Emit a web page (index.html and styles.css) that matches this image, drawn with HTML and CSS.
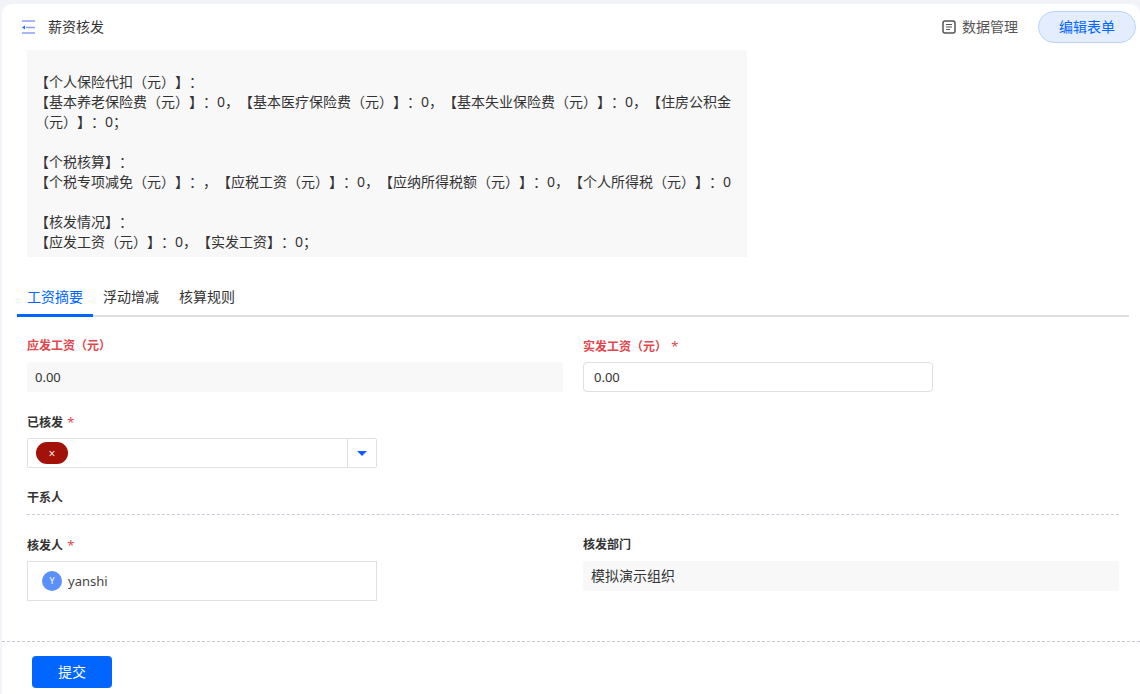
FILE: index.html
```html
<!DOCTYPE html>
<html lang="zh-CN">
<head>
  <meta charset="UTF-8">
  <title>薪资核发</title>
  <link rel="stylesheet" href="styles.css">
</head>
<body>
  <div class="card">
    <header class="topbar">
      <svg class="menu-icon" width="14" height="14" viewBox="0 0 14 14">
        <path d="M1 1h13M5 7.5h9M1 13h13" stroke="#8c9dff" stroke-width="1.6" fill="none"/>
        <path d="M1 7.5l3-2v4z" fill="#1f6bff"/>
      </svg>
      <span class="page-title">薪资核发</span>
      <div class="topbar-right">
        <svg class="data-icon" width="14" height="14" viewBox="0 0 14 14">
          <rect x="1" y="1" width="12" height="12" rx="2" stroke="#555" stroke-width="1.5" fill="none"/>
          <path d="M4 4.5h6M4 7h6M4 9.5h4" stroke="#555" stroke-width="1.1" fill="none"/>
        </svg>
        <span class="data-link">数据管理</span>
        <button class="edit-btn">编辑表单</button>
      </div>
    </header>

    <main class="content">
      <div class="summary">
        <p>&nbsp;</p>
        <p>【个人保险代扣（元）】：</p>
        <p>【基本养老保险费（元）】：0，【基本医疗保险费（元）】：0，【基本失业保险费（元）】：0，【住房公积金（元）】：0；</p>
        <p>&nbsp;</p>
        <p>【个税核算】：</p>
        <p>【个税专项减免（元）】：，【应税工资（元）】：0，【应纳所得税额（元）】：0，【个人所得税（元）】：0</p>
        <p>&nbsp;</p>
        <p>【核发情况】：</p>
        <p>【应发工资（元）】：0，【实发工资】：0；</p>
      </div>

      <nav class="tabs">
        <a class="tab active">工资摘要</a>
        <a class="tab">浮动增减</a>
        <a class="tab">核算规则</a>
      </nav>

      <section class="form">
        <div class="row two-col">
          <div class="field">
            <label class="label red">应发工资（元）</label>
            <div class="readonly num">0.00</div>
          </div>
          <div class="field">
            <label class="label red">实发工资（元） <i class="req">*</i></label>
            <div class="input num">0.00</div>
          </div>
        </div>

        <div class="field select-field">
          <label class="label">已核发 <i class="req">*</i></label>
          <div class="select">
            <div class="select-value"><span class="chip">×</span></div>
            <div class="select-arrow"><span class="caret"></span></div>
          </div>
        </div>

        <div class="group-title">干系人</div>

        <div class="row two-col">
          <div class="field">
            <label class="label">核发人 <i class="req">*</i></label>
            <div class="user-box">
              <span class="avatar">Y</span>
              <span class="user-name">yanshi</span>
            </div>
          </div>
          <div class="field">
            <label class="label">核发部门</label>
            <div class="readonly">模拟演示组织</div>
          </div>
        </div>
      </section>
    </main>

    <footer class="footer">
      <button class="submit-btn">提交</button>
    </footer>
  </div>
</body>
</html>
```

FILE: styles.css
```css
* {
  box-sizing: border-box;
}

html, body {
  height: 100%;
}

body {
  margin: 0;
  padding: 4px 0 0 2px;
  background-color: #f2f3f8;
  color: #333;
  font-family: "Noto Sans", "Noto Sans CJK SC", sans-serif;
  font-size: 14px;
  text-spacing-trim: space-all;
  overflow: hidden;
}

.card {
  height: 690px;
  background-color: #fff;
  border-radius: 10px 10px 0 0;
  display: flex;
  flex-direction: column;
}

.topbar {
  height: 46px;
  flex: none;
  display: flex;
  align-items: center;
  padding-left: 19px;
}

.menu-icon {
  margin-right: 13px;
}

.page-title {
  padding-bottom: 2px;
  color: #333;
}

.topbar-right {
  margin-left: auto;
  display: flex;
  align-items: center;
  padding-right: 4px;
}

.data-link {
  margin-left: 6px;
  margin-right: 20px;
  padding-bottom: 2px;
  color: #555;
}

.edit-btn {
  width: 98px;
  height: 32px;
  padding: 0 0 2px;
  border: 1px solid #bcd4fb;
  border-radius: 16px;
  background-color: #e3edfd;
  color: #0066ff;
  font: inherit;
}

.content {
  flex: 1;
  padding: 0 11px 0 15px;
}

.summary {
  width: 720px;
  margin-left: 10px;
  padding: 2px 12px 5px 8px;
  background-color: #f8f8f8;
  line-height: 20px;
  color: #333;
}

.summary p {
  margin: 0;
}

.tabs {
  display: flex;
  height: 60px;
  align-items: flex-end;
  border-bottom: 2px solid #e0e0e0;
}

.tab {
  display: block;
  padding: 0 10px 7px;
  height: 34px;
  line-height: 28px;
  color: #333;
  margin-bottom: -2px;
  border-bottom: 3px solid transparent;
}

.tab.active {
  color: #0066ff;
  border-bottom-color: #0066ff;
}

.form {
  padding: 0 0 0 10px;
  width: 1102px;
}

.two-col {
  display: grid;
  grid-template-columns: 536px 536px;
  column-gap: 20px;
}

.row {
  padding-top: 20px;
}

.label {
  display: block;
  height: 25px;
  line-height: 18px;
  font-size: 12px;
  font-weight: 700;
  color: #333;
}

.label.red {
  color: #e0474c;
}

.req {
  font-style: normal;
  font-size: 13px;
  font-weight: 400;
  color: #e0474c;
  margin-left: 1px;
}

.readonly {
  height: 30px;
  line-height: 30px;
  padding: 0 8px;
  background-color: #f8f8f8;
  border-radius: 2px;
  color: #333;
}

.input {
  width: 350px;
  height: 30px;
  line-height: 28px;
  padding: 0 10px;
  border: 1px solid #e0e0e0;
  border-radius: 4px;
}

.num {
  font-size: 13px;
}

.select-field {
  padding-top: 21px;
}

.select {
  width: 350px;
  height: 30px;
  display: flex;
  border: 1px solid #e0e0e0;
  border-radius: 2px;
}

.select-value {
  flex: 1;
  display: flex;
  align-items: center;
  padding-left: 8px;
}

.chip {
  width: 32px;
  height: 22px;
  border-radius: 11px;
  background-color: #a31208;
  color: #f7e3e1;
  font-size: 12px;
  line-height: 23px;
  text-align: center;
}

.select-arrow {
  width: 29px;
  display: flex;
  align-items: center;
  justify-content: center;
  border-left: 1px solid #e0e0e0;
}

.caret {
  width: 0;
  height: 0;
  border-left: 5px solid transparent;
  border-right: 5px solid transparent;
  border-top: 5px solid #0f5bff;
}

.group-title {
  margin-top: 21px;
  margin-bottom: 1px;
  height: 26px;
  line-height: 18px;
  font-size: 12px;
  font-weight: 700;
  border-bottom: 1px dashed #c8cfdc;
}

.user-box {
  width: 350px;
  height: 40px;
  display: flex;
  align-items: center;
  padding-left: 14px;
  border: 1px solid #e0e0e0;
}

.avatar {
  width: 20px;
  height: 20px;
  border-radius: 50%;
  background-color: #5b8ff9;
  color: #fff;
  font-size: 9px;
  line-height: 20px;
  text-align: center;
}

.user-name {
  margin-left: 6px;
  font-size: 13px;
  color: #444;
}

.footer {
  flex: none;
  height: 53px;
  border-top: 1px dashed #c2c7d0;
  padding: 14px 0 0 30px;
}

.submit-btn {
  width: 80px;
  height: 32px;
  padding: 0 0 2px;
  border: none;
  border-radius: 4px;
  background-color: #0066ff;
  color: #fff;
  font: inherit;
}
```
